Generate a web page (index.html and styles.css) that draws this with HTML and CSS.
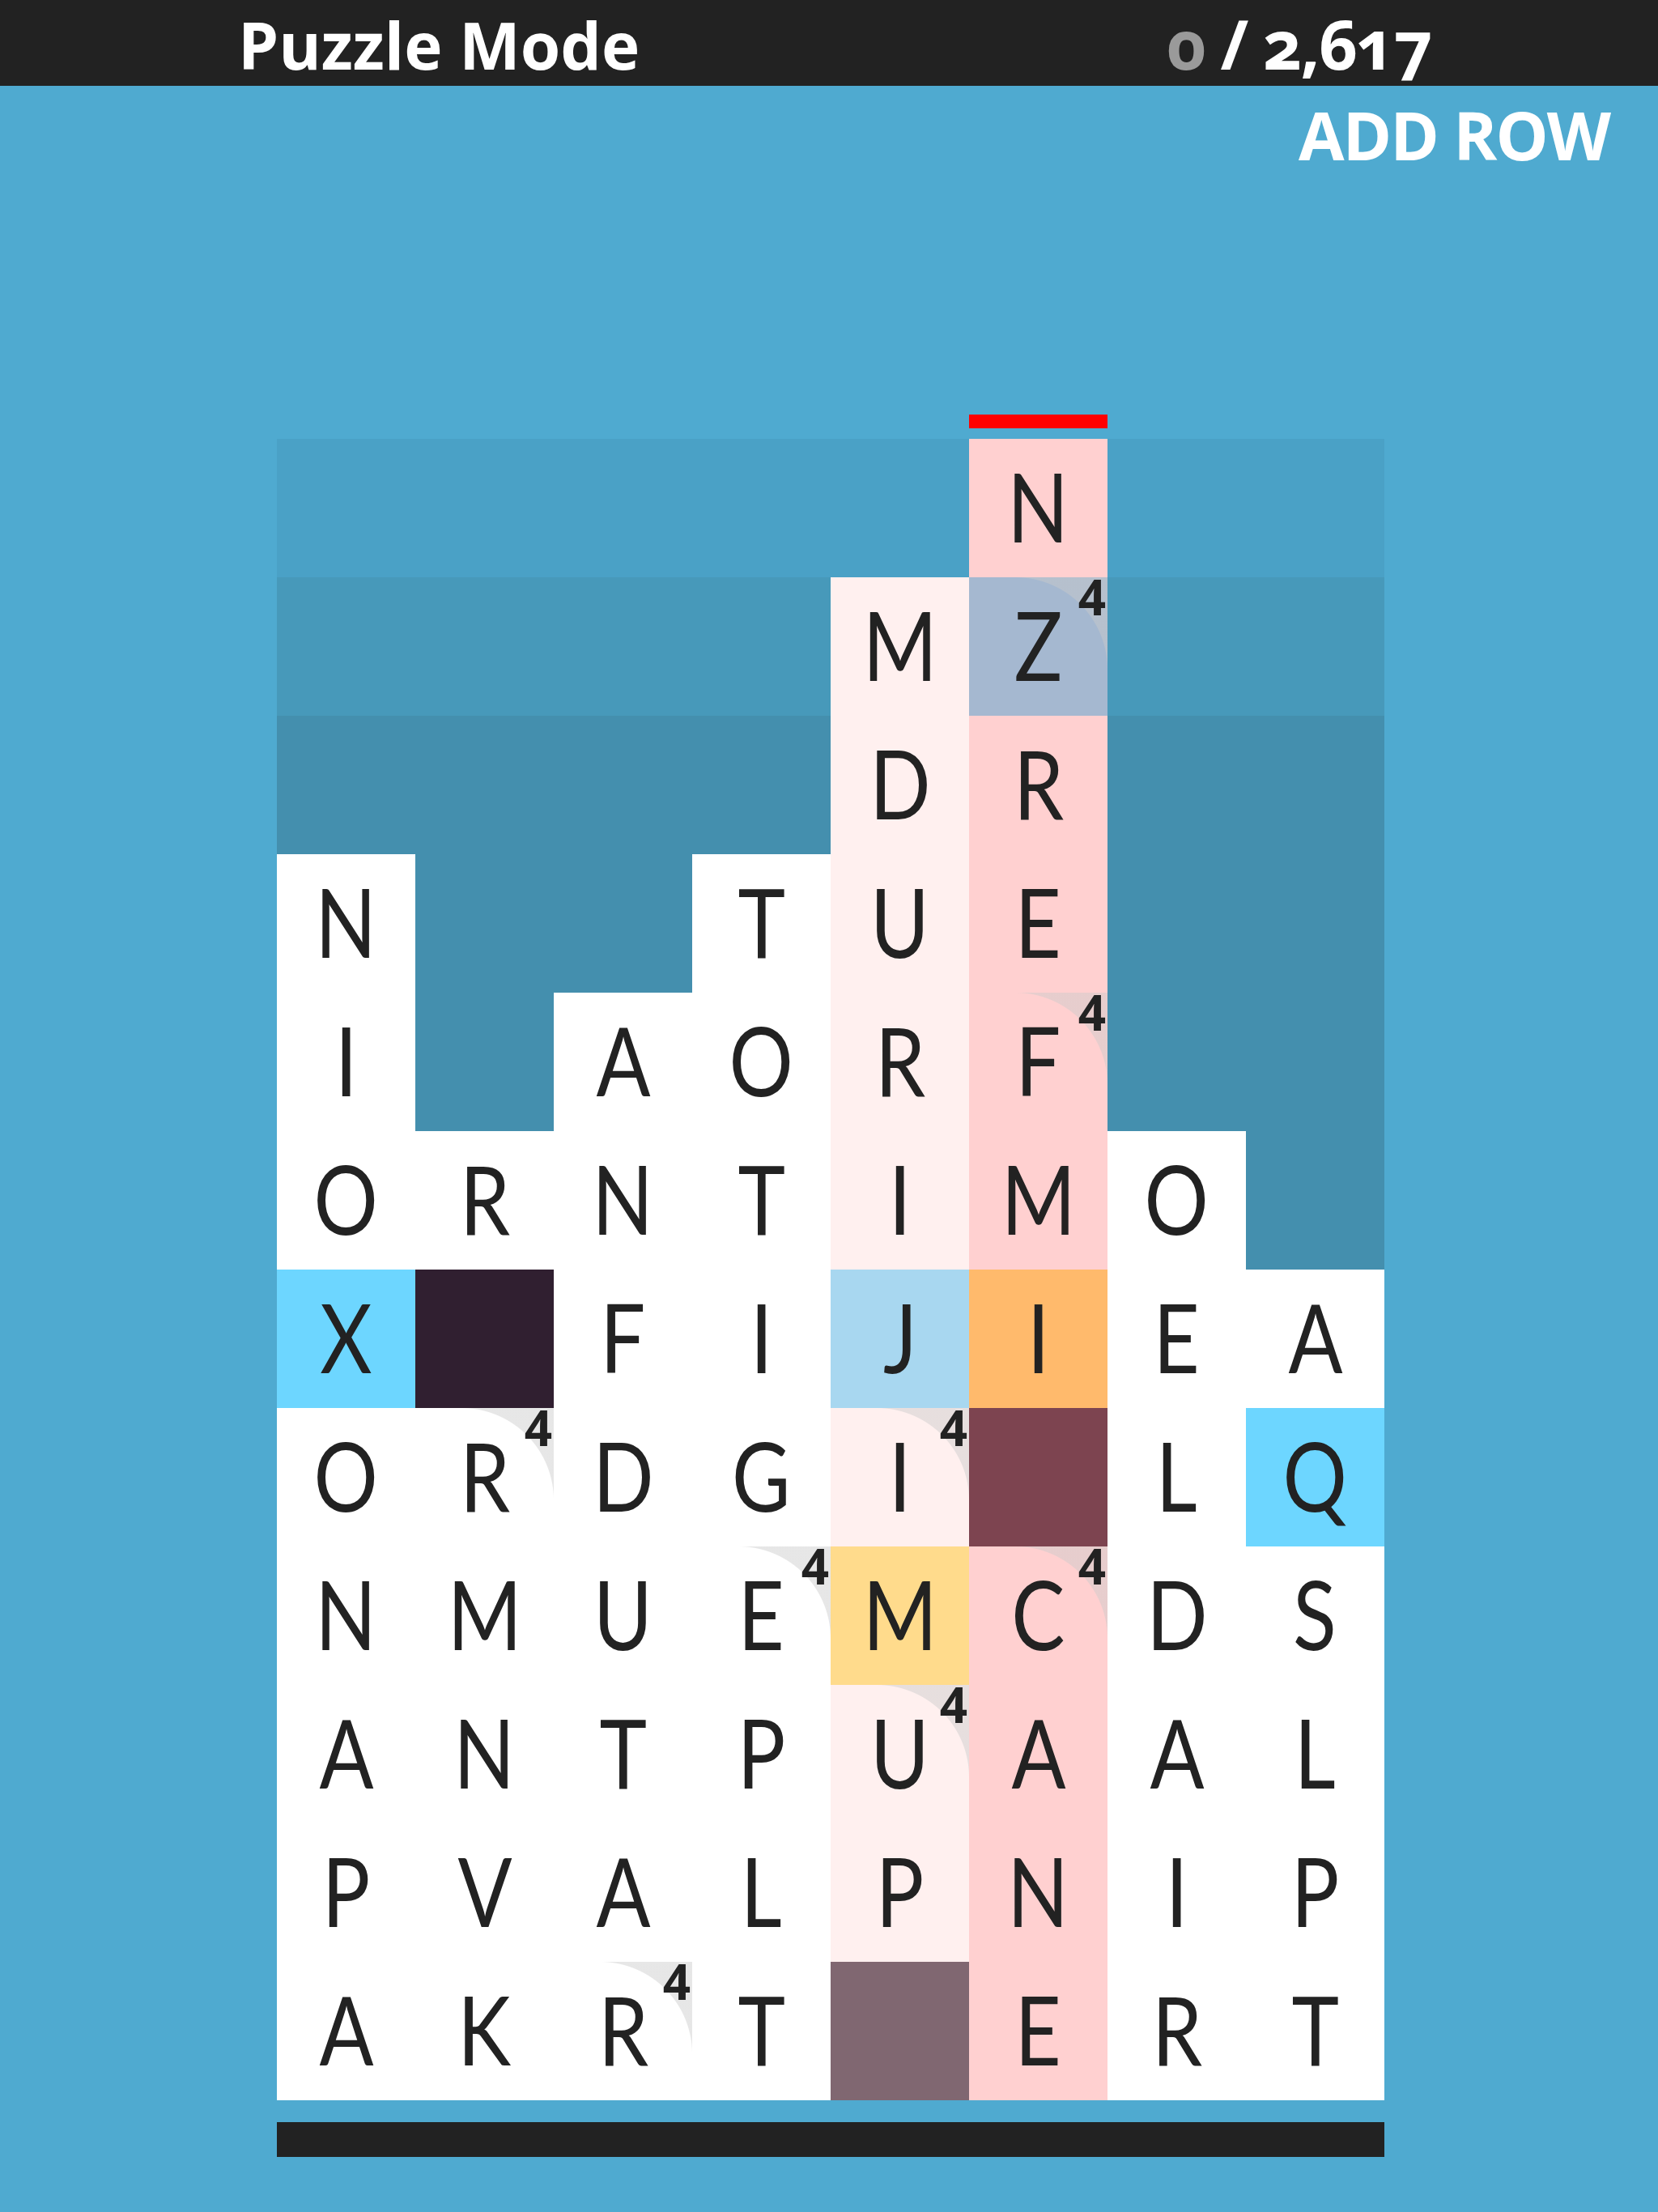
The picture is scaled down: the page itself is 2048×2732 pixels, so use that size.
FILE: index.html
```html
<!DOCTYPE html>
<html lang="en">
<head>
<meta charset="utf-8">
<title>Puzzle Mode</title>
<link rel="stylesheet" href="styles.css">
</head>
<body>
<header class="topbar">
  <div class="title">Puzzle Mode</div>
  <div class="score"><span class="score-cur">0</span> / 2,617</div>
</header>
<div class="toolbar">
  <div class="add-row">ADD ROW</div>
</div>
<main class="board">
  <div class="markers">
    <div class="marker"></div>
  </div>
  <div class="grid">
    <!-- row 0 -->
    <div class="cell empty"></div><div class="cell empty"></div><div class="cell empty"></div><div class="cell empty"></div><div class="cell empty"></div>
    <div class="cell pk"><span class="ch">N</span></div>
    <div class="cell empty"></div><div class="cell empty"></div>
    <!-- row 1 -->
    <div class="cell empty"></div><div class="cell empty"></div><div class="cell empty"></div><div class="cell empty"></div>
    <div class="cell lp"><span class="ch">M</span></div>
    <div class="cell zb bonus"><span class="ch">Z</span><span class="fold"></span><span class="pts">4</span></div>
    <div class="cell empty"></div><div class="cell empty"></div>
    <!-- row 2 -->
    <div class="cell empty"></div><div class="cell empty"></div><div class="cell empty"></div><div class="cell empty"></div>
    <div class="cell lp"><span class="ch">D</span></div>
    <div class="cell pk"><span class="ch">R</span></div>
    <div class="cell empty"></div><div class="cell empty"></div>
    <!-- row 3 -->
    <div class="cell w"><span class="ch">N</span></div>
    <div class="cell empty"></div><div class="cell empty"></div>
    <div class="cell w"><span class="ch">T</span></div>
    <div class="cell lp"><span class="ch">U</span></div>
    <div class="cell pk"><span class="ch">E</span></div>
    <div class="cell empty"></div><div class="cell empty"></div>
    <!-- row 4 -->
    <div class="cell w"><span class="ch">I</span></div>
    <div class="cell empty"></div>
    <div class="cell w"><span class="ch">A</span></div>
    <div class="cell w"><span class="ch">O</span></div>
    <div class="cell lp"><span class="ch">R</span></div>
    <div class="cell pk bonus"><span class="ch">F</span><span class="fold"></span><span class="pts">4</span></div>
    <div class="cell empty"></div><div class="cell empty"></div>
    <!-- row 5 -->
    <div class="cell w"><span class="ch">O</span></div>
    <div class="cell w"><span class="ch">R</span></div>
    <div class="cell w"><span class="ch">N</span></div>
    <div class="cell w"><span class="ch">T</span></div>
    <div class="cell lp"><span class="ch">I</span></div>
    <div class="cell pk"><span class="ch">M</span></div>
    <div class="cell w"><span class="ch">O</span></div>
    <div class="cell empty"></div>
    <!-- row 6 -->
    <div class="cell cy"><span class="ch">X</span></div>
    <div class="cell dk"></div>
    <div class="cell w"><span class="ch">F</span></div>
    <div class="cell w"><span class="ch">I</span></div>
    <div class="cell lb"><span class="ch">J</span></div>
    <div class="cell or"><span class="ch">I</span></div>
    <div class="cell w"><span class="ch">E</span></div>
    <div class="cell w"><span class="ch">A</span></div>
    <!-- row 7 -->
    <div class="cell w"><span class="ch">O</span></div>
    <div class="cell w bonus"><span class="ch">R</span><span class="fold"></span><span class="pts">4</span></div>
    <div class="cell w"><span class="ch">D</span></div>
    <div class="cell w"><span class="ch">G</span></div>
    <div class="cell lp bonus"><span class="ch">I</span><span class="fold"></span><span class="pts">4</span></div>
    <div class="cell mr"></div>
    <div class="cell w"><span class="ch">L</span></div>
    <div class="cell cy"><span class="ch">Q</span></div>
    <!-- row 8 -->
    <div class="cell w"><span class="ch">N</span></div>
    <div class="cell w"><span class="ch">M</span></div>
    <div class="cell w"><span class="ch">U</span></div>
    <div class="cell w bonus"><span class="ch">E</span><span class="fold"></span><span class="pts">4</span></div>
    <div class="cell yl"><span class="ch">M</span></div>
    <div class="cell pk bonus"><span class="ch">C</span><span class="fold"></span><span class="pts">4</span></div>
    <div class="cell w"><span class="ch">D</span></div>
    <div class="cell w"><span class="ch">S</span></div>
    <!-- row 9 -->
    <div class="cell w"><span class="ch">A</span></div>
    <div class="cell w"><span class="ch">N</span></div>
    <div class="cell w"><span class="ch">T</span></div>
    <div class="cell w"><span class="ch">P</span></div>
    <div class="cell lp bonus"><span class="ch">U</span><span class="fold"></span><span class="pts">4</span></div>
    <div class="cell pk"><span class="ch">A</span></div>
    <div class="cell w"><span class="ch">A</span></div>
    <div class="cell w"><span class="ch">L</span></div>
    <!-- row 10 -->
    <div class="cell w"><span class="ch">P</span></div>
    <div class="cell w"><span class="ch">V</span></div>
    <div class="cell w"><span class="ch">A</span></div>
    <div class="cell w"><span class="ch">L</span></div>
    <div class="cell lp"><span class="ch">P</span></div>
    <div class="cell pk"><span class="ch">N</span></div>
    <div class="cell w"><span class="ch">I</span></div>
    <div class="cell w"><span class="ch">P</span></div>
    <!-- row 11 -->
    <div class="cell w"><span class="ch">A</span></div>
    <div class="cell w"><span class="ch">K</span></div>
    <div class="cell w bonus"><span class="ch">R</span><span class="fold"></span><span class="pts">4</span></div>
    <div class="cell w"><span class="ch">T</span></div>
    <div class="cell mv"></div>
    <div class="cell pk"><span class="ch">E</span></div>
    <div class="cell w"><span class="ch">R</span></div>
    <div class="cell w"><span class="ch">T</span></div>
  </div>
  <div class="floor"></div>
</main>
</body>
</html>
```

FILE: styles.css
```css
* { box-sizing: border-box; }

html, body {
  margin: 0;
  padding: 0;
}

body {
  width: 2048px;
  height: 2732px;
  background: #4faad0;
  font-family: "Open Sans", "Liberation Sans", sans-serif;
  color: #ffffff;
  overflow: hidden;
}

.topbar {
  height: 106px;
  background: #222222;
  display: flex;
  justify-content: space-between;
  align-items: flex-start;
  padding: 2px 280px 0 294px;
}

.title {
  font-size: 80px;
  line-height: 96px;
  font-weight: 700;
  letter-spacing: 0;
  padding-top: 5px;
}

.score {
  font-size: 84px;
  line-height: 96px;
  font-weight: 700;
  letter-spacing: -2px;
  padding-top: 4px;
  font-variant-numeric: oldstyle-nums;
}

.score-cur {
  color: #9a9a9a;
}

.toolbar {
  display: flex;
  justify-content: flex-end;
  margin-top: 18px;
  padding-right: 60px;
  height: 84px;
}

.add-row {
  font-size: 82px;
  line-height: 84px;
  font-weight: 700;
  letter-spacing: -2px;
}

.board {
  width: 1368px;
  margin: 304px 0 0 342px;
}

.markers {
  display: grid;
  grid-template-columns: repeat(8, 171px);
  height: 17px;
  margin-bottom: 13px;
}

.marker {
  grid-column: 6;
  background: #ff0000;
}

.grid {
  display: grid;
  grid-template-columns: repeat(8, 171px);
  grid-auto-rows: 171px;
  background: linear-gradient(to bottom,
    #4aa1c6 0, #4aa1c6 171px,
    #4799ba 171px, #4799ba 342px,
    #448fae 342px, #448fae 100%);
}

.cell {
  position: relative;
  display: flex;
  align-items: center;
  justify-content: center;
  padding-bottom: 6px;
}

.ch {
  position: relative;
  z-index: 1;
  font-family: "Lato", "Open Sans", sans-serif;
  font-weight: 400;
  font-size: 118px;
  line-height: 1;
  color: #222222;
  transform: scaleX(0.84);
}

.empty { background: transparent; }
.w  { background: #ffffff; }
.lp { background: #fff0ef; }
.pk { background: #ffd0d0; }
.zb { background: #a5b8d0; }
.cy { background: #6dd6ff; }
.dk { background: #301f30; }
.lb { background: #a8d7f0; }
.or { background: #ffba6c; }
.mr { background: #7d4450; }
.yl { background: #ffdb8c; }
.mv { background: #806771; }

.fold {
  position: absolute;
  top: 0;
  right: 0;
  width: 114px;
  height: 114px;
  background: radial-gradient(circle at 0 100%, rgba(202, 202, 202, 0) 113.5px, rgba(202, 202, 202, 0.46) 114.5px);
}

.pts {
  position: absolute;
  z-index: 2;
  top: 0;
  right: 2px;
  font-family: "Open Sans", "Liberation Sans", sans-serif;
  font-weight: 700;
  font-size: 60px;
  line-height: 48px;
  color: #222222;
}

.floor {
  margin-top: 27px;
  height: 43px;
  background: #222222;
}
```
